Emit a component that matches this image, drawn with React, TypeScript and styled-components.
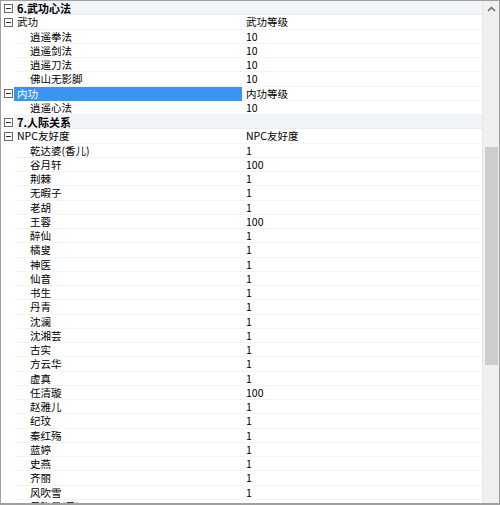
import styled, { createGlobalStyle } from 'styled-components';

type Row =
  | { kind: 'category'; label: string }
  | { kind: 'group'; label: string; value: string; selected?: boolean }
  | { kind: 'item'; label: string; value: string };

const npc: [string, string][] = [
  ['乾达婆(香儿)', '1'],
  ['谷月轩', '100'],
  ['荆棘', '1'],
  ['无暇子', '1'],
  ['老胡', '1'],
  ['王蓉', '100'],
  ['醉仙', '1'],
  ['橘叟', '1'],
  ['神医', '1'],
  ['仙音', '1'],
  ['书生', '1'],
  ['丹青', '1'],
  ['沈澜', '1'],
  ['沈湘芸', '1'],
  ['古实', '1'],
  ['方云华', '1'],
  ['虚真', '1'],
  ['任清璇', '100'],
  ['赵雅儿', '1'],
  ['纪玟', '1'],
  ['秦红殇', '1'],
  ['蓝婷', '1'],
  ['史燕', '1'],
  ['齐丽', '1'],
  ['风吹雪', '1'],
  ['风吹雪(男)', '100'],
];

const rows: Row[] = [
  { kind: 'category', label: '6.武功心法' },
  { kind: 'group', label: '武功', value: '武功等级' },
  { kind: 'item', label: '逍遥拳法', value: '10' },
  { kind: 'item', label: '逍遥剑法', value: '10' },
  { kind: 'item', label: '逍遥刀法', value: '10' },
  { kind: 'item', label: '佛山无影脚', value: '10' },
  { kind: 'group', label: '内功', value: '内功等级', selected: true },
  { kind: 'item', label: '逍遥心法', value: '10' },
  { kind: 'category', label: '7.人际关系' },
  { kind: 'group', label: 'NPC友好度', value: 'NPC友好度' },
  ...npc.map(([label, value]) => ({ kind: 'item' as const, label, value })),
];

const App = () => {
  return (
    <>
      <GlobalStyle />
      <Frame>
        <List>
          {rows.map((row, i) => (
            <RowLine key={i} $category={row.kind === 'category'}>
              <Margin>{row.kind !== 'item' && <Toggle />}</Margin>
              {row.kind === 'category' ? (
                <CategoryName>{row.label}</CategoryName>
              ) : (
                <>
                  <Name
                    $indent={row.kind === 'item'}
                    $selected={row.kind === 'group' && !!row.selected}
                  >
                    {row.label}
                  </Name>
                  <Value>{row.value}</Value>
                </>
              )}
            </RowLine>
          ))}
        </List>
        <ScrollBar>
          <Arrow>
            <svg width="9" height="6" viewBox="0 0 9 6">
              <path d="M1 5 L4.5 1.5 L8 5" fill="none" stroke="#606060" strokeWidth="1.4" />
            </svg>
          </Arrow>
          <Thumb />
        </ScrollBar>
      </Frame>
    </>
  );
};

export default App;

const GlobalStyle = createGlobalStyle`
  html, body {
    margin: 0;
    padding: 0;
    background: #ffffff;
  }
  body {
    font-family: "Noto Sans CJK SC", "Noto Sans", sans-serif;
  }
`;

const Frame = styled.div`
  display: flex;
  width: 500px;
  height: 505px;
  box-sizing: border-box;
  border: 1px solid #a0a0a0;
  border-bottom-width: 2px;
  overflow: hidden;
  background: #ffffff;
`;

const List = styled.div`
  flex: 1;
  display: flex;
  flex-direction: column;
  overflow: hidden;
`;

const RowLine = styled.div<{ $category: boolean }>`
  display: grid;
  grid-template-columns: 13px 229px 1fr;
  flex: 0 0 14.25px;
  height: 14.25px;
  font-size: 10.5px;
  line-height: 14.25px;
  color: #000000;
  background: ${(p) => (p.$category ? '#f1f5fa' : '#ffffff')};
  box-shadow: inset 0 -1px 0 ${(p) => (p.$category ? '#e8edf3' : '#f4f4f4')};
`;

const Margin = styled.div`
  display: flex;
  align-items: center;
  justify-content: center;
  background: #ffffff;
`;

const Toggle = styled.span`
  position: relative;
  width: 9px;
  height: 9px;
  box-sizing: border-box;
  border: 1px solid #6a6a6a;
  margin-left: 1px;

  &::after {
    content: '';
    position: absolute;
    left: 1px;
    right: 1px;
    top: 3px;
    height: 1px;
    background: #303030;
  }
`;

const CategoryName = styled.div`
  grid-column: 2 / 4;
  padding-left: 3px;
  font-weight: bold;
  font-size: 11px;
  white-space: nowrap;
`;

const Name = styled.div<{ $indent: boolean; $selected: boolean }>`
  padding-left: ${(p) => (p.$indent ? '16px' : '3px')};
  white-space: nowrap;
  overflow: hidden;
  background: ${(p) => (p.$selected ? '#3b94f3' : 'transparent')};
  color: ${(p) => (p.$selected ? '#ffffff' : '#000000')};
  margin-right: 1px;
`;

const Value = styled.div`
  padding-left: 3px;
  white-space: nowrap;
  overflow: hidden;
`;

const ScrollBar = styled.div`
  flex: 0 0 16px;
  display: flex;
  flex-direction: column;
  align-items: center;
  background: #f0f0f0;
  border-left: 1px solid #e6e6e6;
`;

const Arrow = styled.div`
  display: flex;
  align-items: center;
  justify-content: center;
  width: 100%;
  height: 16px;
`;

const Thumb = styled.div`
  width: 13px;
  height: 218px;
  margin-top: 130px;
  background: #cdcdcd;
`;
